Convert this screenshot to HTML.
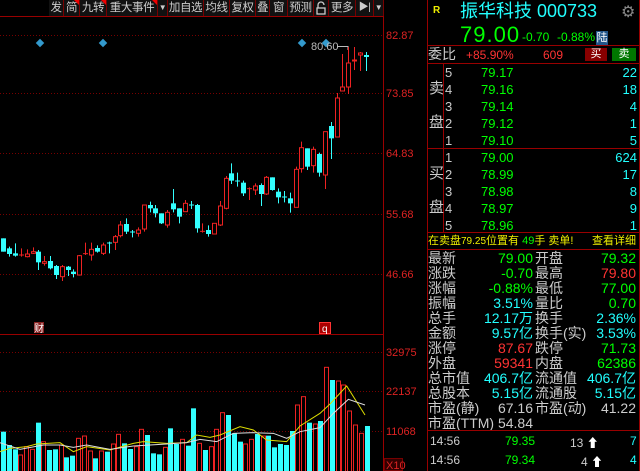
<!DOCTYPE html>
<html><head><meta charset="utf-8">
<style>
*{margin:0;padding:0;box-sizing:border-box}
body{width:640px;height:471px;background:#000;overflow:hidden;position:relative;font-family:"Liberation Sans","Noto Sans CJK SC",sans-serif;}
.a{position:absolute;white-space:nowrap}
.tb{position:absolute;top:0;height:16px;background:#111;border-right:1px solid #700;color:#ccc;font-size:11.5px;line-height:16px;text-align:center;white-space:nowrap;overflow:hidden;letter-spacing:-0.4px}
.tri{position:absolute;right:0;top:0;width:0;height:0;border-top:5px solid #e00;border-left:5px solid transparent}
.g{color:#0f0}.c{color:#2ff}.r{color:#f33}.w{color:#ccc}.y{color:#ee0}
.row{position:absolute;left:428px;width:210px;height:17px;font-size:13px;line-height:17px}
.st{position:absolute;left:428px;width:210px;height:15px;font-size:14px;line-height:15px}
.st span{position:absolute}
</style></head><body>
<div class="tb" style="left:49px;width:15px">发</div>
<div class="tb" style="left:64px;width:16px">简<i class="tri"></i></div>
<div class="tb" style="left:80px;width:27px">九转<i class="tri"></i></div>
<div class="tb" style="left:107px;width:51px">重大事件<i class="tri"></i></div>
<div class="tb" style="left:158px;width:10px;font-size:8px">▼</div>
<div class="tb" style="left:168px;width:36px">加自选</div>
<div class="tb" style="left:204px;width:26px">均线</div>
<div class="tb" style="left:230px;width:26px">复权</div>
<div class="tb" style="left:256px;width:14px">叠</div>
<div class="tb" style="left:270px;width:18px">窗</div>
<div class="tb" style="left:288px;width:26px">预测</div>
<div class="tb" style="left:314px;width:15px"><svg width="12" height="14" style="margin-top:1px"><path d="M3 7V4a3 3 0 0 1 6 0" fill="none" stroke="#ccc" stroke-width="1.3"/><rect x="2" y="7" width="8" height="6" fill="none" stroke="#ccc" stroke-width="1.3"/></svg></div>
<div class="tb" style="left:329px;width:27px">更多</div>
<div class="tb" style="left:356px;width:18px;font-size:10px">▶|</div>
<div class="tb" style="left:374px;width:10px;font-size:8px">▼</div>
<div class="a" style="left:0;top:16px;width:384px;height:1px;background:#900"></div>

<svg id="ch" class="a" style="left:0;top:0" width="427" height="471"></svg>

<div class="a" style="left:427px;top:0;width:213px;height:471px;border-left:1px solid #900;border-right:1px solid #900"></div>
<div class="a y" style="left:433px;top:5px;font-size:10px;font-weight:bold">R</div>
<div class="a c" style="left:460px;top:0px;font-size:18px;line-height:22px">振华科技 000733</div>
<div class="a" style="left:621px;top:2px;color:#888;font-size:16px">⚙</div>
<div class="a g" style="left:460px;top:23px;font-size:22px;line-height:24px;letter-spacing:1px">79.00</div>
<div class="a g" style="left:522px;top:30px;font-size:12px">-0.70</div>
<div class="a g" style="left:557px;top:30px;font-size:12px">-0.88%</div>
<div class="a" style="left:596px;top:31px;width:12px;height:14px;background:#258;color:#fff;font-size:11px;line-height:14px;text-align:center">陆</div>
<div class="a" style="left:428px;top:45px;width:211px;height:1px;background:#900"></div>
<div class="a w" style="left:428px;top:46px;font-size:14px;line-height:17px">委比</div>
<div class="a r" style="left:466px;top:48px;font-size:12px">+85.90%</div>
<div class="a r" style="left:543px;top:48px;font-size:12px">609</div>
<div class="a" style="left:585px;top:48px;width:22px;height:13px;background:#800;color:#fff;font-size:11px;line-height:13px;text-align:center">买</div>
<div class="a" style="left:612px;top:48px;width:24px;height:13px;background:#070;color:#fff;font-size:11px;line-height:13px;text-align:center">卖</div>
<div class="a" style="left:428px;top:63px;width:211px;height:1px;background:#900"></div>
<div class="a" style="left:443px;top:63px;width:1px;height:169px;background:#900"></div>
<div class="a w" style="left:429px;top:80px;font-size:15px;line-height:17px">卖<br><br>盘</div>
<div class="a w" style="left:429px;top:165px;font-size:15px;line-height:17px">买<br><br>盘</div>
<div id="ob"></div>
<div class="a" style="left:428px;top:148px;width:211px;height:1px;background:#900"></div>
<div class="a" style="left:428px;top:232px;width:211px;height:1px;background:#900"></div>
<div class="a y" style="left:428px;top:234px;font-size:11px;line-height:14px">在卖盘<span style="font-size:10px">79.25</span>位置有 <span class="g">49</span>手 卖单!</div>
<div class="a y" style="right:4px;top:234px;font-size:11px;line-height:14px">查看详细</div>
<div class="a" style="left:428px;top:249px;width:211px;height:1px;background:#900"></div>
<div id="sts"></div>
<div class="a" style="left:428px;top:430px;width:211px;height:1px;background:#900"></div>
<div class="a w" style="left:430px;top:434px;font-size:12px">14:56</div><div class="a g" style="left:505px;top:434px;font-size:12px">79.35</div><div class="a w" style="left:570px;top:434px;font-size:12px">13 <span style="color:#fff">⬆</span></div><div class="a c" style="left:630px;top:434px;font-size:12px">7</div>
<div class="a w" style="left:430px;top:453px;font-size:12px">14:56</div><div class="a g" style="left:505px;top:453px;font-size:12px">79.34</div><div class="a w" style="left:581px;top:453px;font-size:12px">4 <span style="color:#fff">⬆</span></div><div class="a c" style="left:630px;top:453px;font-size:12px">4</div>

<script>
var ob=document.getElementById('ob'),h='';
var sell=[['5','79.17','22'],['4','79.16','18'],['3','79.14','4'],['2','79.12','1'],['1','79.10','5']];
var buy=[['1','79.00','624'],['2','78.99','17'],['3','78.98','8'],['4','78.97','9'],['5','78.96','1']];
function r(a,t){return '<div class="row" style="top:'+t+'px"><span class="a w" style="left:17px">'+a[0]+'</span><span class="a g" style="left:53px">'+a[1]+'</span><span class="a c" style="right:1px">'+a[2]+'</span></div>';}
sell.forEach(function(a,i){h+=r(a,64+i*17)});buy.forEach(function(a,i){h+=r(a,149+i*17)});
ob.innerHTML=h;
var S=[['最新','79.00','g','开盘','79.32','g'],['涨跌','-0.70','g','最高','79.80','r'],['涨幅','-0.88%','g','最低','77.00','g'],['振幅','3.51%','c','量比','0.70','g'],['总手','12.17万','c','换手','2.36%','c'],['金额','9.57亿','c','换手(实)','3.53%','c'],['涨停','87.67','r','跌停','71.73','g'],['外盘','59341','r','内盘','62386','g'],['总市值','406.7亿','c','流通值','406.7亿','c'],['总股本','5.15亿','c','流通股','5.15亿','c'],['市盈(静)','67.16','w','市盈(动)','41.22','w'],['市盈(TTM)','54.84','w','','','w']];
h='';S.forEach(function(a,i){h+='<div class="st" style="top:'+(251+i*15)+'px"><span class="w" style="left:0">'+a[0]+'</span><span class="'+a[2]+'" style="right:105px">'+a[1]+'</span><span class="w" style="left:107px">'+a[3]+'</span><span class="'+a[5]+'" style="right:2px">'+a[4]+'</span></div>'});
document.getElementById('sts').innerHTML=h;

var s='';
function L(x1,y1,x2,y2,c,ex){s+='<line x1="'+x1+'" y1="'+y1+'" x2="'+x2+'" y2="'+y2+'" stroke="'+c+'" '+(ex||'')+'/>';}
function T(x,y,t,c,fs){s+='<text x="'+x+'" y="'+y+'" fill="'+c+'" font-size="'+(fs||11)+'" font-family="Liberation Sans,Noto Sans CJK SC,sans-serif">'+t+'</text>';}
L(383.5,16,383.5,471,'#900');
L(0,334.5,383,334.5,'#900');
[[35,'82.87'],[93,'73.85'],[153,'64.83'],[214,'55.68'],[274,'46.66']].forEach(function(a){L(0,a[0]+.5,383,a[0]+.5,'#700','stroke-dasharray="1,2"');T(386,a[0]+4,a[1],'#d22');});
[[352,'32975'],[391,'22137'],[431,'11068']].forEach(function(a){L(0,a[0]+.5,383,a[0]+.5,'#700','stroke-dasharray="1,2"');T(386,a[0]+4,a[1],'#d22');});
s+='<rect x="384.5" y="458.5" width="18" height="12" fill="#300" stroke="#700"/>';T(386,469,'X10','#d22');
[40,103,302,326].forEach(function(x){s+='<rect x="'+(x-3)+'" y="'+(40)+'" width="6" height="6" fill="#39c" transform="rotate(45 '+x+' 43)"/>';});
T(311,50,'80.60','#bbb',11);L(337,46.5,348,46.5,'#bbb');L(348,46,348,50,'#bbb');
var C=[[10,415,455,415,455,'c'],[28,440,470,445,462,'c'],[45,430,470,460,467,'c'],[63,445,470,465,466,'r'],[80,448,472,462,470,'r'],[98,442,462,455,460,'r'],[115,450,510,455,487,'c'],[133,468,497,485,490,'r'],[150,468,508,483,505,'c'],[168,495,537,498,525,'c'],[185,495,543,500,530,'r'],[203,498,528,500,510,'c'],[220,508,532,515,522,'c'],[238,465,527,467,525,'r'],[256,428,465,461,463,'r'],[273,428,482,448,465,'r'],[291,436,458,444,455,'c'],[308,428,465,435,460,'r'],[326,425,460,429,432,'c'],[344,405,450,410,427,'r'],[361,363,412,375,407,'r'],[379,355,402,372,395,'c'],[397,390,412,396,400,'c'],[414,382,410,390,400,'r'],[432,315,395,315,387,'r'],[449,305,337,315,325,'c'],[466,315,352,325,340,'c'],[484,340,372,340,370,'c'],[502,330,383,337,375,'r'],[519,267,337,310,328,'c'],[537,325,370,325,350,'c'],[555,300,335,310,335,'r'],[572,303,327,315,318,'c'],[590,312,398,315,385,'c'],[607,370,398,394,396,'r'],[624,376,410,390,402,'c'],[641,370,402,370,402,'r'],[659,303,378,318,375,'r'],[677,228,328,235,325,'r'],[694,190,252,220,242,'c'],[712,218,260,243,246,'c'],[730,242,288,248,280,'c'],[747,262,300,266,269,'r'],[765,250,285,258,270,'r'],[782,250,318,255,282,'c'],[799,228,285,232,282,'r'],[817,232,272,232,270,'c'],[834,265,310,275,292,'c'],[852,273,307,291,295,'c'],[870,278,338,295,310,'c'],[887,200,322,208,322,'r'],[904,125,218,143,206,'r'],[922,145,210,145,200,'c'],[940,140,218,148,197,'r'],[957,158,230,162,218,'c'],[975,95,267,95,225,'r'],[992,66,177,78,115,'c']];
var col={c:'#3ff',r:'#e22'};
C.forEach(function(a){var x=Math.round(a[0]/3)+.5;var y=function(v){return 100+v/3};
 L(x,y(a[1]),x,y(a[2]),col[a[5]]);
 var bt=y(a[3]),bb=y(a[4]);if(bb-bt<1.5){L(x-2.5,bt,x+2.5,bt,col[a[5]]);return;}
 if(a[5]=='c')s+='<rect x="'+(x-2.5)+'" y="'+bt+'" width="5" height="'+(bb-bt)+'" fill="#3ff"/>';
 else s+='<rect x="'+(x-2)+'" y="'+bt+'" width="4" height="'+(bb-bt)+'" fill="#000" stroke="#e22"/>';});
[[337,93,137,98,137,'r'],[342,54,91,87,91,'r'],[348,47,94,63,87,'r'],[354,47,70,60,61,'r'],[360,52,71,53,55,'r'],[366,52,71,55,57,'c']].forEach(function(a){var x=a[0]+.5;L(x,a[1],x,a[2],col[a[5]]);var bt=a[3],bb=a[4];
 if(a[5]=='c')s+='<rect x="'+(x-2.5)+'" y="'+bt+'" width="5" height="'+(bb-bt)+'" fill="#3ff"/>';
 else s+='<rect x="'+(x-2)+'" y="'+bt+'" width="4" height="'+(bb-bt)+'" fill="#000" stroke="#e22"/>';});
var V='c395 c435 c448 r465 r440 r448 c368 r425 c450 c448 r435 c472 c467 r415 r408 r453 c475 r453 c455 r432 r403 c430 c447 r440 r388 c405 c460 c463 r442 c385 c432 r418 c437 c325 r430 c450 r440 r388 r338 c345 c400 c425 r432 r418 c402 r408 c407 c442 c432 c435 c393 r315 r290 c368 r372 c363 r202 c240 r243 r255 r333 r375 r400 c378'.split(' ');
V.forEach(function(v,i){var x=Math.round(3+i*5.77);var t=300+parseInt(v.slice(1))/3;
 if(v[0]=='c')s+='<rect x="'+(x-2)+'" y="'+t+'" width="5" height="'+(471-t)+'" fill="#3ff"/>';
 else s+='<rect x="'+(x-1.5)+'" y="'+t+'" width="4" height="'+(472-t)+'" fill="#000" stroke="#e22"/>';});
function P(arr,c){var p=[];for(var i=0;i<arr.length;i+=2)p.push((arr[i]/3)+','+(300+arr[i+1]/3));s+='<polyline points="'+p.join(' ')+'" fill="none" stroke="'+c+'" stroke-width="1"/>';}
P([0,455,30,445,80,440,110,432,180,428,220,455,260,440,330,450,400,430,430,425,500,430,560,428,590,405,630,412,660,405,720,380,760,390,800,420,860,425,900,378,960,340,990,312,1040,258,1095,345],'#dd0');
P([0,428,60,448,130,435,180,435,220,442,260,435,330,448,400,438,500,432,560,428,600,418,650,425,700,400,760,398,820,400,860,415,900,395,960,383,1000,340,1045,298,1095,315],'#ddd');
s+='<rect x="34" y="322" width="10" height="11" fill="#822"/>';T(34,332,'财','#fff',10);
s+='<rect x="319.5" y="322.5" width="11" height="11" fill="#a00" stroke="#f33"/>';T(322,332,'q','#fff',10);
document.getElementById('ch').innerHTML=s;
</script>
</body></html>
